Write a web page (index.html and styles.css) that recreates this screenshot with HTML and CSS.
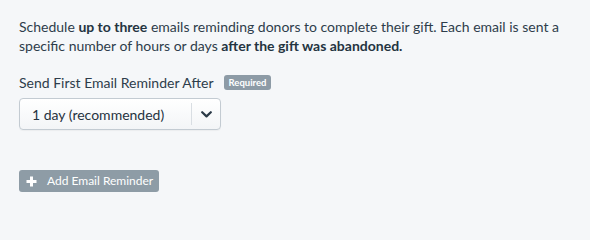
FILE: index.html
```html
<!DOCTYPE html>
<html>
<head>
<meta charset="utf-8">
<link rel="stylesheet" href="styles.css">
</head>
<body>
<div class="panel">
  <p class="intro">Schedule <strong>up to three</strong> emails reminding donors to complete their gift. Each email is sent a specific number of hours or days <strong>after the gift was abandoned.</strong></p>
  <div class="field">
    <div class="label-row">
      <span class="label">Send First Email Reminder After</span>
      <span class="badge">Required</span>
    </div>
    <div class="select">
      <span class="select-value">1 day (recommended)</span>
      <span class="select-arrow">
        <svg width="11" height="7" viewBox="0 0 11 7"><path d="M1.2 1.2 L5.5 5.4 L9.8 1.2" fill="none" stroke="#2b3a47" stroke-width="2.2" stroke-linecap="round" stroke-linejoin="round"/></svg>
      </span>
    </div>
  </div>
  <button class="add-btn" type="button">
    <svg class="plus" width="11" height="11" viewBox="0 0 11 11"><path d="M5.5 0.5 V10.5 M0.5 5.5 H10.5" stroke="#fff" stroke-width="3"/></svg>
    <span class="add-label">Add Email Reminder</span>
  </button>
</div>
</body>
</html>
```
FILE: styles.css
```css
html, body {
  margin: 0;
  padding: 0;
  background: #f5f7f9;
}
body {
  font-family: "Lato", "Liberation Sans", sans-serif;
  color: #2e3d4b;
}
.panel {
  padding: 17px 19px 0 19px;
  display: flex;
  flex-direction: column;
  align-items: flex-start;
}
.intro {
  margin: 0;
  font-size: 14px;
  line-height: 19px;
}
.intro strong {
  font-weight: 700;
  color: #243441;
}
.field {
  margin-top: 18px;
  display: flex;
  flex-direction: column;
  gap: 6px;
}
.label-row {
  display: flex;
  align-items: center;
  gap: 10px;
}
.label {
  font-size: 14px;
  line-height: 19px;
}
.badge {
  background: #8d9ba6;
  color: #fff;
  font-size: 9.5px;
  font-weight: 700;
  line-height: 15px;
  padding: 0 5px;
  border-radius: 3px;
}
.select {
  width: 200px;
  height: 30px;
  border: 1px solid #c3cbd2;
  border-radius: 4px;
  background: linear-gradient(#ffffff, #f3f5f7);
  display: flex;
  align-items: stretch;
  box-shadow: 0 1px 1px rgba(0,0,0,0.04);
}
.select-value {
  flex: 1;
  display: flex;
  align-items: center;
  padding-left: 12px;
  font-size: 14px;
  color: #26333f;
}
.select-arrow {
  width: 28px;
  display: flex;
  align-items: center;
  justify-content: center;
  border-left: 1px solid #d9dee3;
  margin: 4px 0;
}
.add-btn {
  margin-top: 40px;
  height: 22px;
  border: none;
  border-radius: 3px;
  background: #8e9ca6;
  color: #fff;
  font-family: inherit;
  font-size: 12px;
  display: flex;
  align-items: center;
  gap: 10px;
  padding: 0 6px 0 7px;
  white-space: nowrap;
}
.plus {
  flex-shrink: 0;
}
.add-label {
  line-height: 22px;
}
```
